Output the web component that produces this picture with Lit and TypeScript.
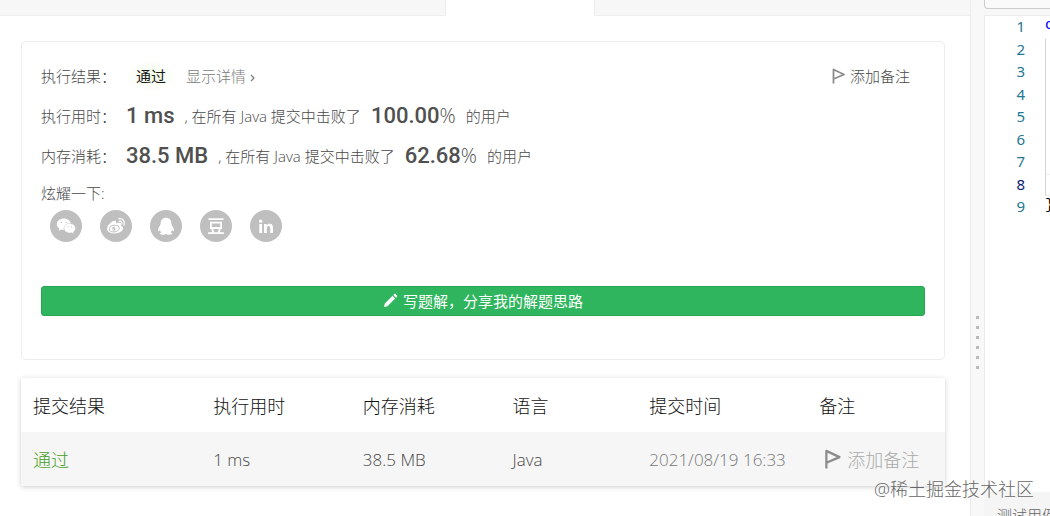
import { LitElement, html, css, svg } from "lit";
import { customElement } from "lit/decorators.js";

const flag = html`<svg class="flag" viewBox="0 0 14 16" aria-hidden="true">
  <path d="M2.500 15.500V1.500L13 6.500L2.500 11" fill="none" stroke="currentColor" stroke-width="1.800" stroke-linejoin="round" />
</svg>`;

const shares = [
  {
    name: "微信",
    icon: svg`
      <path fill="#fff" d="M13.800 8.500c-4 0-7 2.500-7 5.700 0 1.800 1 3.400 2.600 4.400l-.8 2.200 2.700-1.400c.8.2 1.600.4 2.400.4 4 0 7.100-2.500 7.100-5.600s-3.100-5.700-7-5.700z"/>
      <path fill="#fff" stroke="#bfbfbf" stroke-width=".5" d="M19.800 13.400c-3.300 0-5.800 2.100-5.800 4.800s2.500 4.800 5.800 4.800c.6 0 1.300-.1 1.900-.3l2.200 1.200-.6-1.900c1.400-.9 2.200-2.200 2.200-3.800 0-2.700-2.500-4.800-5.700-4.800z"/>
      <g fill="#bfbfbf"><circle cx="11.400" cy="12.400" r=".7"/><circle cx="16.100" cy="12.400" r=".7"/><circle cx="18" cy="16.800" r=".6"/><circle cx="21.700" cy="16.800" r=".6"/></g>`,
  },
  {
    name: "微博",
    icon: svg`
      <path fill="#fff" d="M13.500 11c1.600-.7 2.800-.2 2.700 1.300l-.2 1c2.300-1 4.800-1 5 .8 0 .5-.2 1-.4 1.500 1.500.5 2.500 1.400 2.500 2.700 0 2.700-3.700 5.200-8.400 5.200-4.400 0-7.700-1.900-7.700-4.800 0-2.600 3.500-6.500 6.500-7.700z"/>
      <ellipse cx="14.200" cy="18.600" rx="5" ry="3.300" fill="none" stroke="#bfbfbf" stroke-width="1" transform="rotate(-8 14.200 18.600)"/>
      <circle cx="13.700" cy="18.900" r="1.800" fill="#bfbfbf"/><circle cx="13" cy="19.300" r=".8" fill="#fff"/>
      <path fill="none" stroke="#fff" stroke-width="1.300" stroke-linecap="round" d="M18.800 8.700c3.900-.8 6.600 2.700 5.200 6.300M19.300 11.300c1.800-.3 2.900 1 2.500 2.700"/>`,
  },
  {
    name: "QQ",
    icon: svg`
      <path fill="#fff" d="M16 7.700c-3.600 0-5.500 2.600-5.400 6.100-.1.500-.5.900-.5 1.600-1.300 1.600-2.300 3.600-2.100 5.300.1.900.9.500 1.900-.7.200.9.700 1.700 1.400 2.400-1 .4-1.600.9-1.500 1.400.2 1.100 4.800 1.100 6.200.1 1.400 1 6 1 6.200-.1.100-.5-.5-1-1.500-1.400.7-.7 1.200-1.500 1.400-2.400 1 1.200 1.800 1.600 1.900.7.200-1.700-.8-3.700-2.100-5.300 0-.7-.4-1.100-.5-1.600.1-3.500-1.800-6.100-5.400-6.100z"/>`,
  },
  {
    name: "豆瓣",
    icon: svg`
      <path fill="none" stroke="#fff" stroke-width="1.800" d="M8.500 9.200h15M8 23.200h16M10.900 12.700h10.200v5.300H10.900zM12.200 19l1.300 3.700M19.800 19l-1.300 3.700"/>`,
  },
  {
    name: "LinkedIn",
    icon: svg`
      <g fill="#fff"><circle cx="10.700" cy="11.200" r="1.700"/><path d="M9.300 14h2.800v9H9.300zM14 14h2.700v1.300c.6-1 1.600-1.600 2.900-1.600 2.300 0 3.400 1.500 3.400 4V23h-2.800v-4.800c0-1.300-.5-2.100-1.600-2.100s-1.800.8-1.800 2.200V23H14z"/></g>`,
  },
];

@customElement("submission-result")
class SubmissionResult extends LitElement {
  static styles = css`
    :host {
      display: block;
      box-sizing: border-box;
      border: 1px solid #ededed;
      border-radius: 5px;
      padding: 14px 19px 43px;
      color: #484848;
      font-size: 15px;
    }
    .row {
      display: flex;
      align-items: center;
      gap: 10px;
      height: 40px;
      line-height: 40px;
      white-space: nowrap;
    }
    .label { width: 75px; }
    .brag { height: 34px; line-height: 34px; }
    .status {
      box-sizing: border-box;
      color: #1a1a1a;
      font-weight: 400;
      line-height: 30px;
      padding: 0 10px;
      background: radial-gradient(closest-side, #f3fce9 20%, #fff);
    }
    a { color: #7c7c7c; text-decoration: none; }
    .note {
      display: flex;
      align-items: center;
      gap: 5px;
      margin-left: auto;
      margin-right: 15px;
      padding: 0;
      border: 0;
      background: none;
      color: #484848;
      font: inherit;
    }
    .flag { width: 14px; height: 16px; color: #8c8c8c; }
    .chevron { width: 5px; height: 8px; margin-left: 4px; }
    .value { color: #505050; font: 500 22px/40px "Roboto", sans-serif; }
    .percent { font: 300 20px/40px "Open Sans", sans-serif; }
    .shares { display: flex; gap: 18px; padding-left: 9px; }
    .share { width: 32px; height: 32px; padding: 0; border: 0; border-radius: 50%; background: #bfbfbf; }
    .share svg { display: block; width: 32px; height: 32px; }
    .write {
      display: flex;
      box-sizing: border-box;
      align-items: center;
      justify-content: center;
      gap: 5px;
      width: 100%;
      height: 30px;
      margin-top: 44px;
      padding: 0 6px 2px;
      border: 1px solid #27a552;
      border-radius: 3px;
      background: #2fb55d;
      color: #fff;
      font: inherit;
      font-weight: 400;
    }
    .write svg { width: 15px; height: 15px; }
  `;

  stat(label: string, value: string, rate: string) {
    return html`<div class="row">
      <span class="label">${label}：</span>
      <span class="value">${value}</span>
      <span>, 在所有 Java 提交中击败了</span>
      <span class="value">${rate}<span class="percent">%</span></span>
      <span>的用户</span>
    </div>`;
  }

  render() {
    return html`
      <div class="row">
        <span class="label">执行结果：</span>
        <span class="status">通过</span>
        <a href="#detail">显示详情<svg class="chevron" viewBox="0 0 5 8" aria-hidden="true"><path d="M1 1l3 3-3 3" fill="none" stroke="currentColor" stroke-width="1.200" /></svg></a>
        <button class="note">${flag}添加备注</button>
      </div>
      ${this.stat("执行用时", "1 ms", "100.00")}
      ${this.stat("内存消耗", "38.5 MB", "62.68")}
      <div class="row brag">炫耀一下:</div>
      <div class="shares">
        ${shares.map((s) => html`<button class="share" aria-label=${s.name}><svg viewBox="0 0 32 32" aria-hidden="true">${s.icon}</svg></button>`)}
      </div>
      <button class="write">
        <svg viewBox="0 0 15 15" aria-hidden="true"><path fill="#fff" d="M1 14l.8-3.500 7.700-7.700 2.700 2.700-7.700 7.700zM10.300 2l1-1c.4-.4.9-.4 1.300 0l1.400 1.400c.4.4.4.9 0 1.300l-1 1z" /></svg>
        写题解，分享我的解题思路
      </button>
    `;
  }
}

@customElement("submission-table")
class SubmissionTable extends LitElement {
  static styles = css`
    :host { display: block; box-shadow: 0 1px 5px rgba(0, 0, 0, 0.2); }
    table { width: 100%; table-layout: fixed; border-collapse: collapse; white-space: nowrap; }
    th, td { box-sizing: border-box; height: 54px; padding: 0 0 0 12px; text-align: left; font-weight: 300; }
    th { color: #111; font-size: 18px; }
    td { color: #484848; font-size: 17px; }
    tbody { background: #f6f6f6; }
    .result { width: 19.5%; }
    .time, .memory { width: 16.2%; }
    .language { width: 14.8%; }
    .date { width: 18.4%; }
    a { color: #46a01f; font-size: 18px; text-decoration: none; }
    .when { color: #777; }
    .note {
      display: flex;
      align-items: center;
      gap: 6px;
      padding: 0 0 0 4px;
      border: 0;
      background: none;
      color: #aaa;
      font: inherit;
      font-size: 18px;
    }
    .flag { width: 18px; height: 20px; color: #8c8c8c; }
  `;

  render() {
    return html`<table>
      <thead>
        <tr>
          <th class="result">提交结果</th>
          <th class="time">执行用时</th>
          <th class="memory">内存消耗</th>
          <th class="language">语言</th>
          <th class="date">提交时间</th>
          <th>备注</th>
        </tr>
      </thead>
      <tbody>
        <tr>
          <td><a href="#submission">通过</a></td>
          <td>1 ms</td>
          <td>38.5 MB</td>
          <td>Java</td>
          <td class="when">2021/08/19 16:33</td>
          <td><button class="note">${flag}添加备注</button></td>
        </tr>
      </tbody>
    </table>`;
  }
}

@customElement("code-pane")
class CodePane extends LitElement {
  static styles = css`
    :host { display: flex; flex-direction: column; min-width: 0; overflow: hidden; }
    .toolbar { height: 15px; flex: none; background: #f7f7f7; border-bottom: 1px solid #ececec; }
    .picker { height: 8px; margin-right: -8px; border: 1px solid #ccc; border-top: 0; border-radius: 0 0 0 4px; background: #fafafa; }
    .editor { flex: 1; min-height: 0; border-left: 1px solid #ececec; }
    .lines {
      display: grid;
      grid-auto-rows: 1fr;
      height: 203px;
      font: 15px/20px "Noto Sans", sans-serif;
    }
    .line { display: grid; grid-template-columns: 40px 1fr; column-gap: 20px; white-space: pre; }
    .number { text-align: right; color: #237893; }
    .current .number { color: #0b216f; }
    .code { font-family: "Liberation Mono", monospace; color: #000; }
    .keyword { color: #00f; }
    .inside .code { border-left: 1px solid #d3d3d3; }
    .current .code { border-top: 1px solid #eee; border-bottom: 1px solid #eee; }
    .console { height: 24px; flex: none; overflow: hidden; padding-left: 13px; background: #f5f5f5; color: #666; font-size: 15px; line-height: 46px; white-space: nowrap; }
  `;

  render() {
    return html`
      <div class="toolbar"><div class="picker"></div></div>
      <div class="editor">
        <div class="lines">
          ${[1, 2, 3, 4, 5, 6, 7, 8, 9].map(
            (n) => html`<div class="line ${n > 1 && n < 9 ? "inside" : ""} ${n === 8 ? "current" : ""}"><span class="number">${n}</span><span class="code">${n === 1 ? html`<span class="keyword">class</span>` : n === 9 ? "}" : ""}</span></div>`
          )}
        </div>
      </div>
      <div class="console">测试用例</div>
    `;
  }
}

@customElement("app-root")
class AppRoot extends LitElement {
  static styles = css`
    :host {
      display: grid;
      grid-template-columns: minmax(0, 1fr) 14px 66px;
      position: relative;
      height: 100vh;
      overflow: hidden;
      background: #fff;
      font-family: "Open Sans", "Noto Sans CJK SC", sans-serif;
      font-weight: 300;
    }
    .tabs { display: grid; grid-template-columns: 46% 148px 1fr; height: 16px; }
    .tab { background: #f7f7f7; border-bottom: 1px solid #efefef; }
    .tab.before { border-right: 1px solid #ececec; }
    .tab.active { background: #fff; border-color: #fff; }
    .tab.after { border-left: 1px solid #ececec; }
    .content { display: grid; gap: 18px; padding: 25px 25px 0 21px; }
    .divider {
      display: flex;
      flex-direction: column;
      align-items: center;
      gap: 7px;
      padding-top: 316px;
      background: #f8f8f8;
      border-left: 1px solid #ececec;
    }
    .dot { width: 3px; height: 3px; background: #bbb; }
    .credit {
      position: absolute;
      right: 16px;
      bottom: 15px;
      color: #666;
      font-size: 18px;
      line-height: 24px;
      text-shadow: 0 0 2px #fff;
    }
  `;

  render() {
    return html`
      <main>
        <div class="tabs"><div class="tab before"></div><div class="tab active"></div><div class="tab after"></div></div>
        <div class="content">
          <submission-result></submission-result>
          <submission-table></submission-table>
        </div>
      </main>
      <div class="divider">${[0, 1, 2, 3, 4, 5].map(() => html`<i class="dot"></i>`)}</div>
      <code-pane></code-pane>
      <div class="credit">@稀土掘金技术社区</div>
    `;
  }
}
